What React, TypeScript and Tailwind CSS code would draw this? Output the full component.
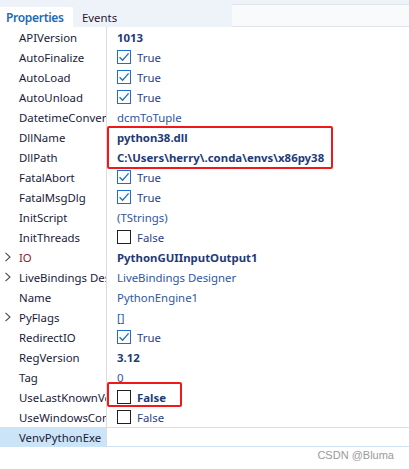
import React from "react";

type Row = {
  name: string;
  value?: string;
  kind?: "text" | "bold" | "check" | "uncheck" | "empty";
  arrow?: boolean;
  nameColor?: string;
  boldLabel?: boolean;
  selected?: boolean;
};

const rows: Row[] = [
  { name: "APIVersion", value: "1013", kind: "bold" },
  { name: "AutoFinalize", value: "True", kind: "check" },
  { name: "AutoLoad", value: "True", kind: "check" },
  { name: "AutoUnload", value: "True", kind: "check" },
  { name: "DatetimeConversionMode", value: "dcmToTuple", kind: "text" },
  { name: "DllName", value: "python38.dll", kind: "bold" },
  { name: "DllPath", value: "C:\\Users\\herry\\.conda\\envs\\x86py38", kind: "bold" },
  { name: "FatalAbort", value: "True", kind: "check" },
  { name: "FatalMsgDlg", value: "True", kind: "check" },
  { name: "InitScript", value: "(TStrings)", kind: "text" },
  { name: "InitThreads", value: "False", kind: "uncheck" },
  { name: "IO", value: "PythonGUIInputOutput1", kind: "bold", arrow: true, nameColor: "text-[#8a1c2c]" },
  { name: "LiveBindings Designer", value: "LiveBindings Designer", kind: "text", arrow: true },
  { name: "Name", value: "PythonEngine1", kind: "text" },
  { name: "PyFlags", value: "[]", kind: "text", arrow: true },
  { name: "RedirectIO", value: "True", kind: "check" },
  { name: "RegVersion", value: "3.12", kind: "bold" },
  { name: "Tag", value: "0", kind: "text" },
  { name: "UseLastKnownVersion", value: "False", kind: "uncheck", boldLabel: true },
  { name: "UseWindowsConsole", value: "False", kind: "uncheck" },
  { name: "VenvPythonExe", kind: "empty", selected: true },
];

function Chevron() {
  return (
    <svg width="8" height="10" viewBox="0 0 8 10" className="absolute left-[4px] top-[5px]">
      <path d="M1.5 0.8 L6 5 L1.5 9.2" fill="none" stroke="#4a4a4a" strokeWidth="1.1" />
    </svg>
  );
}

function Box({ checked }: { checked: boolean }) {
  return (
    <div
      className={
        "w-[14px] h-[14px] shrink-0 border flex items-center justify-center bg-white " +
        (checked ? "border-[#1a6fd0]" : "border-[#1f1f1f]")
      }
    >
      {checked && (
        <svg width="12" height="12" viewBox="0 0 12 12">
          <path d="M1.6 6.2 L4.6 9.2 L10.6 2.4" fill="none" stroke="#1a6fd0" strokeWidth="1.3" />
        </svg>
      )}
    </div>
  );
}

export default function App() {
  return (
    <div
      className="relative w-[409px] h-[469px] bg-white overflow-hidden text-[11.4px]"
      style={{ fontFamily: '"Segoe UI", "Noto Sans", sans-serif' }}
    >
      {/* tab strip */}
      <div className="flex h-[27px] bg-[#eef3f9]">
        <div className="w-[73px] mt-[7px] h-[20px] bg-white flex items-center pl-[6px] pt-px text-[12px] font-semibold text-[#1c6bb5] tracking-[-0.3px]">
          Properties
        </div>
        <div className="w-[159px] mt-[7px] h-[20px] flex items-center pl-[9px] pt-px text-[#2a1630]">
          Events
        </div>
        <div className="flex-1 mt-[4px] h-[23px] border-y border-[#e1e6ec] bg-[#f8fafc]" />
      </div>

      {/* grid */}
      <div className="flex flex-col">
        {rows.map((r, i) => (
          <div key={i} className="flex h-[20px]">
            <div
              className={
                "relative w-[107px] shrink-0 border-r border-[#dcdcdc] pl-[19px] pt-px leading-[19px] overflow-hidden whitespace-nowrap " +
                (r.selected ? "bg-[#cce4f7] " : "") +
                (r.nameColor ?? "text-[#1a1a38]")
              }
            >
              {r.arrow && <Chevron />}
              {r.name}
            </div>
            <div
              className={
                "flex-1 min-w-0 flex items-center gap-[6px] pl-[10px] whitespace-nowrap overflow-hidden " +
                (r.selected ? "border-y border-[#cfe3f5]" : "")
              }
            >
              {r.kind === "check" && <Box checked />}
              {r.kind === "uncheck" && <Box checked={false} />}
              {r.kind === "bold" && <span className="font-bold text-[#1e3a78] pt-px">{r.value}</span>}
              {r.kind === "text" && <span className="text-[#2f56a0] pt-px">{r.value}</span>}
              {(r.kind === "check" || r.kind === "uncheck") && (
                <span className={(r.boldLabel ? "font-bold text-[#1e3a78]" : "text-[#2c3e86]") + " pt-px"}>
                  {r.value}
                </span>
              )}
            </div>
          </div>
        ))}
      </div>

      {/* red highlight boxes */}
      <div className="absolute left-[107px] top-[126px] w-[226px] h-[43px] border-[2px] border-[#f01818] rounded-[2px]" />
      <div className="absolute left-[107px] top-[382px] w-[75px] h-[25px] border-[2px] border-[#f01818] rounded-[2px]" />

      {/* watermark */}
      <div
        className="absolute right-[15px] top-[447px] text-[11px] text-[#9a9a9a]"
        style={{ fontFamily: '"Liberation Sans", Arial, sans-serif' }}
      >
        CSDN @Bluma
      </div>
    </div>
  );
}
